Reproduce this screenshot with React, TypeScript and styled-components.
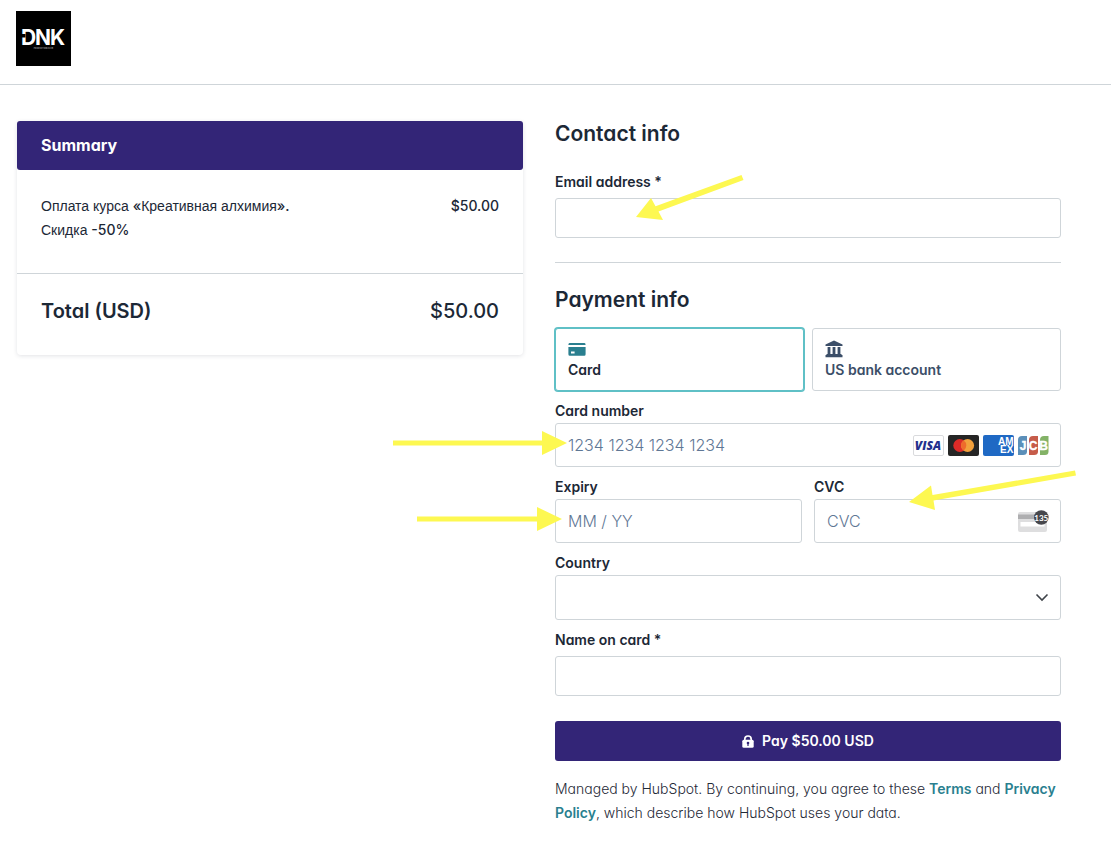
import React, { useState } from 'react';
import styled, { createGlobalStyle } from 'styled-components';

const color = {
  brand: '#332577',
  ink: '#1f2a37',
  text: '#1c2836',
  muted: '#3b4e68',
  placeholder: '#5f7795',
  border: '#cfd5d9',
  teal: '#2a7f8f',
  active: '#5fc0c6',
  arrow: '#fdf851',
};

const GlobalStyle = createGlobalStyle`
  *, *::before, *::after { box-sizing: border-box; }
  body {
    margin: 0;
    background: #fff;
    color: ${color.text};
    font-family: Inter, 'Liberation Sans', sans-serif;
    font-feature-settings: 'cv11';
    font-size: 14px;
    line-height: 24px;
  }
  h1, h2, p { margin: 0; }
  button, input, select { font: inherit; font-feature-settings: inherit; color: inherit; }
`;

const Header = styled.header`
  padding: 11px 16px 18px;
  border-bottom: 1px solid ${color.border};
`;

const Logo = styled.svg`
  display: block;
  width: 55px;
  height: 55px;
`;

const Main = styled.main`
  display: grid;
  grid-template-columns: 1fr 1fr;
  align-items: start;
  gap: 32px;
  padding: 36px 50px 40px 17px;
`;

const SummaryCard = styled.section`
  border-radius: 4px;
  box-shadow: 0 1px 4px rgba(30, 40, 60, 0.13);
`;

const SummaryTitle = styled.h2`
  padding: 12px 24px;
  border-radius: 3px;
  background: ${color.brand};
  color: #fff;
  font-size: 16px;
  font-weight: 700;
  line-height: 25px;
`;

const SummaryRow = styled.div`
  display: flex;
  justify-content: space-between;
  gap: 24px;
  padding: 24px 24px 31px;
`;

const Product = styled.p`
  font-family: 'Liberation Sans', Arial, sans-serif;
`;

const Latin = styled.span`
  font-family: Inter, sans-serif;
  font-weight: 500;
`;

const Price = styled.span`
  font-weight: 500;
`;

const TotalRow = styled(SummaryRow)`
  padding: 25px 24px 32px;
  border-top: 1px solid ${color.border};
  font-size: 20px;
`;

const TotalLabel = styled.span`
  font-weight: 600;
`;

const Form = styled.form`
  display: flex;
  flex-direction: column;
`;

const Heading = styled.h2`
  font-size: 21px;
  font-weight: 600;
  line-height: 26px;
`;

const Divider = styled.hr`
  width: 100%;
  margin: 24px 0;
  border: 0;
  border-top: 1px solid ${color.border};
`;

const Field = styled.div<{ $spaced?: boolean }>`
  position: relative;
  display: flex;
  flex-direction: column;
  gap: ${(p) => (p.$spaced ? 6 : 2)}px;
`;

const EmailField = styled(Field)`
  margin-top: 25px;
`;

const Label = styled.label`
  font-weight: 600;
  line-height: 20px;
`;

const Control = styled.div`
  display: grid;
  align-items: center;
  > * { grid-area: 1 / 1; }
`;

const Input = styled.input<{ $tall?: boolean }>`
  width: 100%;
  height: ${(p) => (p.$tall ? 44 : 40)}px;
  padding: 0 12px;
  border: 1px solid ${color.border};
  border-radius: 3px;
  background: #fff;
  font-size: 16px;
  font-weight: 300;
  &::placeholder { color: ${color.placeholder}; opacity: 1; }
`;

const Select = styled.select`
  width: 100%;
  height: 45px;
  padding: 0 40px 0 12px;
  border: 1px solid ${color.border};
  border-radius: 3px;
  background: #fff;
  appearance: none;
`;

const Adornment = styled.span`
  display: flex;
  gap: 4px;
  justify-self: end;
  margin-right: 12px;
  pointer-events: none;
  svg { display: block; }
`;

const Methods = styled.div`
  display: grid;
  grid-template-columns: 1fr 1fr;
  gap: 8px;
  margin: 15px 0 10px;
`;

const Method = styled.button<{ $active: boolean }>`
  display: flex;
  flex-direction: column;
  align-items: flex-start;
  gap: 2px;
  padding: 11px 12px 10px;
  border: 1px solid ${(p) => (p.$active ? color.active : color.border)};
  border-radius: 3px;
  background: #fff;
  box-shadow: ${(p) => (p.$active ? `0 0 0 1px ${color.active}` : 'none')};
  color: ${(p) => (p.$active ? color.text : color.muted)};
  font-weight: 600;
  line-height: 20px;
  text-align: left;
  svg { display: block; }
`;

const CardFields = styled.div`
  display: flex;
  flex-direction: column;
  gap: 10px;
`;

const Split = styled.div`
  display: grid;
  grid-template-columns: 1fr 1fr;
  gap: 12px;
`;

const PayButton = styled.button`
  display: flex;
  align-items: center;
  justify-content: center;
  gap: 8px;
  height: 40px;
  margin: 25px 0 16px;
  border: 0;
  border-radius: 3px;
  background: ${color.brand};
  color: #fff;
  font-weight: 600;
`;

const Legal = styled.p`
  color: ${color.ink};
  font-weight: 300;
`;

const Link = styled.a`
  color: ${color.teal};
  font-weight: 600;
  text-decoration: none;
`;

const Pointer = styled.svg<{ $x: number; $y: number }>`
  position: absolute;
  z-index: 1;
  left: ${(p) => p.$x}px;
  top: ${(p) => p.$y}px;
  fill: ${color.arrow};
  stroke: none;
  pointer-events: none;
`;

const CardGlyph = () => (
  <svg width="18" height="18" viewBox="0 0 18 18" fill={color.teal} aria-hidden="true">
    <path d="M1.5 3h15Q17.6 3 17.6 5H.4Q.4 3 1.5 3Z" />
    <path fillRule="evenodd" d="M.4 7h17.2v7.2q0 1.5-1.4 1.5H1.8Q.4 15.7 .4 14.2ZM3 11.4v2h3.6v-2Z" />
  </svg>
);

const BankGlyph = () => (
  <svg width="18" height="18" viewBox="0 0 18 18" fill={color.muted} aria-hidden="true">
    <path d="M9 .6 17.5 4.6V6H.5V4.6Z" />
    <path d="M2.6 7h2.8v7.5H2.6ZM7.6 7h2.8v7.5H7.6ZM12.6 7h2.8v7.5h-2.8Z" />
    <path d="M1.5 14h15v1h1v2.3H.5V15h1Z" />
  </svg>
);

const LockGlyph = () => (
  <svg width="12" height="13" viewBox="0 0 12 13" aria-hidden="true">
    <path d="M2.8 6V4.2a3.2 3.2 0 0 1 6.4 0V6" fill="none" stroke="#fff" strokeWidth="1.7" />
    <rect x=".3" y="4.8" width="11.4" height="8" rx="1.5" fill="#fff" />
    <circle cx="6" cy="8" r="1.3" fill={color.brand} />
    <path d="M5.4 8h1.2v3H5.4Z" fill={color.brand} />
  </svg>
);

const Visa = () => (
  <svg width="31" height="21" viewBox="0 0 31 21" role="img" aria-label="Visa">
    <rect x=".5" y=".5" width="30" height="20" rx="1.5" fill="#fff" stroke="#d9dadd" />
    <text x="15" y="15" textAnchor="middle" fontFamily="Open Sans, sans-serif" fontSize="12" fontWeight="800" fontStyle="italic" fill="#23308c">VISA</text>
  </svg>
);

const Mastercard = () => (
  <svg width="31" height="21" viewBox="0 0 31 21" role="img" aria-label="Mastercard">
    <rect width="31" height="21" rx="2" fill="#252525" />
    <circle cx="11.8" cy="10.5" r="6.5" fill="#dc2b28" />
    <circle cx="19.6" cy="10.5" r="6.5" fill="#f2a03c" />
    <path d="M15.7 5.3a6.5 6.5 0 0 1 0 10.4a6.5 6.5 0 0 1 0-10.4Z" fill="#ee6a2c" />
  </svg>
);

const Amex = () => (
  <svg width="31" height="21" viewBox="0 0 31 21" role="img" aria-label="American Express">
    <rect width="31" height="21" rx="2" fill="#1f69c4" />
    <g fontFamily="Liberation Sans, sans-serif" fontSize="10" fontWeight="700" fill="#fff">
      <text x="15" y="10">AM</text>
      <text x="17" y="18">EX</text>
    </g>
  </svg>
);

const Jcb = () => (
  <svg width="31" height="21" viewBox="0 0 31 21" role="img" aria-label="JCB">
    <path d="M4 1h5v15.5Q9 20 5 20H0V5Q0 1 4 1Z" fill="#5b8fb9" />
    <path d="M15 1h5v15.5Q20 20 16 20h-5V5Q11 1 15 1Z" fill="#c65c4a" />
    <path d="M26 1h4.5v15.5Q30.5 20 27 20h-5V5Q22 1 26 1Z" fill="#83b267" />
    <g fontFamily="Liberation Sans, sans-serif" fontSize="12" fontWeight="700" fill="#fff" stroke="#fff" strokeWidth=".4" textAnchor="middle">
      <text x="5" y="14.5">J</text>
      <text x="15" y="14.5">C</text>
      <text x="25.5" y="14.5">B</text>
    </g>
  </svg>
);

const CvcGlyph = () => (
  <svg width="31" height="23" viewBox="0 0 31 23" aria-hidden="true">
    <rect y="2" width="29" height="20" rx="2" fill="#dededf" />
    <path d="M0 4.5h29v4.5H0Z" fill="#aeaeb0" />
    <rect x="2.5" y="12" width="24" height="4.5" fill="#fff" />
    <circle cx="23.3" cy="7.5" r="7.3" fill="#47474c" />
    <text x="23.3" y="10.7" textAnchor="middle" fontFamily="Lato, sans-serif" fontSize="8" fontWeight="700" fill="#fff">135</text>
  </svg>
);

const Chevron = () => (
  <svg width="14" height="9" viewBox="0 0 14 9" fill="none" stroke="#3f4349" strokeWidth="1.6" aria-hidden="true">
    <path d="M1.5 1.5 7 7l5.5-5.5" />
  </svg>
);

export default function App() {
  const [method, setMethod] = useState('card');
  return (
    <>
      <GlobalStyle />
      <Header>
        <Logo viewBox="0 0 55 55" role="img" aria-label="DNK">
          <rect width="55" height="55" />
          <g fontFamily="Inter, sans-serif" fontSize="21" fontWeight="700" fill="#fff">
            <text x="5" y="34">D</text>
            <text x="19" y="34">N</text>
            <text x="34" y="34">K</text>
          </g>
          <path d="M5 23h4.500v3.500H5Z" />
          <text x="27.500" y="38" textAnchor="middle" fontFamily="Inter, sans-serif" fontSize="2" fontWeight="600" fill="#aaa">PRODUCTION CLUB</text>
        </Logo>
      </Header>
      <Main>
        <SummaryCard>
          <SummaryTitle>Summary</SummaryTitle>
          <SummaryRow>
            <Product>
              Оплата курса <Latin>«</Latin>Креативная алхимия<Latin>».</Latin>
              <br />
              Скидка <Latin>-50%</Latin>
            </Product>
            <Price>$50.00</Price>
          </SummaryRow>
          <TotalRow>
            <TotalLabel>Total (USD)</TotalLabel>
            <Price>$50.00</Price>
          </TotalRow>
        </SummaryCard>

        <Form onSubmit={(e) => e.preventDefault()}>
          <Heading>Contact info</Heading>
          <EmailField $spaced>
            <Label htmlFor="email">Email address *</Label>
            <Input id="email" type="email" />
            <Pointer $x={80} $y={2} width="110" height="46" viewBox="0 0 110 46" aria-hidden="true">
              <path d="M1 43 16 24 20.5 32.2 106.5 1 108.5 6 23.5 37.5 28 46Z" />
            </Pointer>
          </EmailField>
          <Divider />
          <Heading>Payment info</Heading>
          <Methods>
            <Method type="button" $active={method === 'card'} aria-pressed={method === 'card'} onClick={() => setMethod('card')}>
              <CardGlyph />
              Card
            </Method>
            <Method type="button" $active={method === 'bank'} aria-pressed={method === 'bank'} onClick={() => setMethod('bank')}>
              <BankGlyph />
              US bank account
            </Method>
          </Methods>
          <CardFields>
            <Field>
              <Label htmlFor="number">Card number</Label>
              <Control>
                <Input id="number" $tall placeholder="1234 1234 1234 1234" />
                <Adornment>
                  <Visa />
                  <Mastercard />
                  <Amex />
                  <Jcb />
                </Adornment>
              </Control>
              <Pointer $x={-162} $y={30} width="174" height="24" viewBox="0 0 174 24" aria-hidden="true">
                <path d="M0 9.5H149V0l25 12-25 12V14.5H0Z" />
              </Pointer>
            </Field>
            <Split>
              <Field>
                <Label htmlFor="expiry">Expiry</Label>
                <Control>
                  <Input id="expiry" $tall placeholder="MM / YY" />
                </Control>
                <Pointer $x={-138} $y={30} width="145" height="24" viewBox="0 0 145 24" aria-hidden="true">
                  <path d="M0 9.5H120V0l25 12-25 12V14.5H0Z" />
                </Pointer>
              </Field>
              <Field>
                <Label htmlFor="cvc">CVC</Label>
                <Control>
                  <Input id="cvc" $tall placeholder="CVC" />
                  <Adornment>
                    <CvcGlyph />
                  </Adornment>
                </Control>
                <Pointer $x={94} $y={-7} width="170" height="42" viewBox="0 0 170 42" aria-hidden="true">
                  <path d="M1 32 23 15.500 24.500 25 167 .5 168 5.500 25.500 30.500 27 40Z" />
                </Pointer>
              </Field>
            </Split>
            <Field>
              <Label htmlFor="country">Country</Label>
              <Control>
                <Select id="country" defaultValue="">
                  <option value="" />
                  <option value="US">United States</option>
                </Select>
                <Adornment>
                  <Chevron />
                </Adornment>
              </Control>
            </Field>
            <Field $spaced>
              <Label htmlFor="name">Name on card *</Label>
              <Input id="name" />
            </Field>
          </CardFields>
          <PayButton type="submit">
            <LockGlyph />
            Pay $50.00 USD
          </PayButton>
          <Legal>
            Managed by HubSpot. By continuing, you agree to these <Link href="#terms">Terms</Link> and{' '}
            <Link href="#privacy">Privacy Policy</Link>, which describe how HubSpot uses your data.
          </Legal>
        </Form>
      </Main>
    </>
  );
}
